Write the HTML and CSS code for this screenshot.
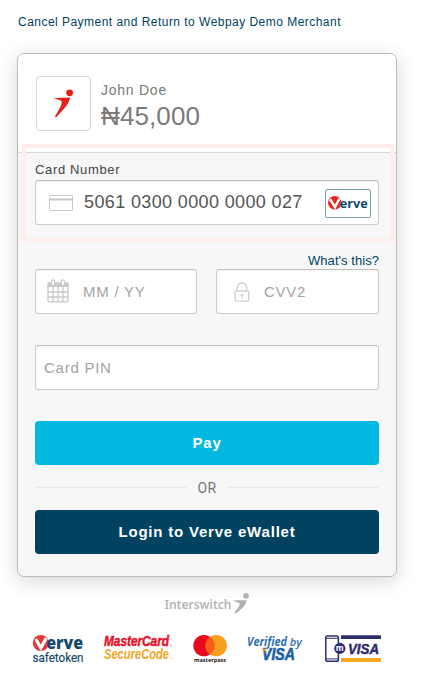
FILE: index.html
```html
<!DOCTYPE html>
<html lang="en">
<head>
<meta charset="utf-8">
<title>Webpay Checkout</title>
<link rel="stylesheet" href="styles.css">
</head>
<body>
<a class="cancel">Cancel Payment and Return to Webpay Demo Merchant</a>
<main class="card">
  <header class="summary">
    <div class="merchant-logo">
      <svg width="55" height="55" viewBox="0 0 55 55"><g fill="#e8201a"><circle cx="33.6" cy="16.8" r="3.4"/><path d="M17.8 22.6C23 21.3 29 21.8 34 21.4C33.4 28 26 34.5 20 41.4L19 40.8C21.5 35.5 26 30 25.7 26C25.5 23.8 21 23.8 17.8 22.6Z"/></g></svg>
    </div>
    <div class="order">
      <div class="name">John Doe</div>
      <div class="amount">₦45,000</div>
    </div>
  </header>
  <section class="form">
    <div class="highlight"></div>
    <label class="label">Card Number</label>
    <div class="field number">
      <svg class="card-icon" width="24" height="16" viewBox="0 0 24 16"><rect x=".5" y=".5" width="23" height="15" rx=".8" fill="#fff" stroke="#c8c8c8"/><path d="M1 4.5H23" stroke="#c8c8c8" stroke-width="2"/></svg>
      <span class="value">5061 0300 0000 0000 027</span>
      <svg class="brand" width="46" height="29" viewBox="0 0 46 29"><rect x=".5" y=".5" width="45" height="28" rx="1.5" fill="#fff" stroke="#7da0b1"/><circle cx="9.8" cy="13.7" r="6.8" fill="#e8241d"/><path d="M5 10.2L10 18L14.6 9.5" fill="none" stroke="#fff" stroke-width="2.6"/><text x="14.8" y="18.7" textLength="28" lengthAdjust="spacingAndGlyphs" class="brand-text">erve</text></svg>
    </div>
    <a class="help">What's this?</a>
    <div class="row">
      <div class="field expiry">
        <svg class="cal-icon" width="22" height="24" viewBox="0 0 22 24"><path d="M1 4H21V8H1Z" fill="#c9c9c9"/><g fill="none" stroke="#c9c9c9" stroke-width="1.3"><rect x="1" y="4" width="20" height="18.8" rx="1"/><path d="M6 8V23M11 8V23M16 8V23M1 13H21M1 18H21"/></g><g fill="#fff" stroke="#c9c9c9" stroke-width="1.2"><rect x="4.6" y=".8" width="3" height="6" rx="1.5"/><rect x="14.4" y=".8" width="3" height="6" rx="1.5"/></g></svg>
        <span class="placeholder">MM / YY</span>
      </div>
      <div class="field cvv">
        <svg class="lock-icon" width="16" height="20" viewBox="0 0 16 20"><g fill="none" stroke="#cfcfcf" stroke-width="1.3"><rect x="1.2" y="9" width="13.6" height="10.1" rx="1"/><path d="M3.2 9V5.8a4.8 4.8 0 0 1 9.6 0V9"/></g><path d="M6.4 12.3H9.6V13.8H8.6V16.3H7.4V13.8H6.4Z" fill="#cfcfcf"/></svg>
        <span class="placeholder">CVV2</span>
      </div>
    </div>
    <div class="field pin"><span class="placeholder">Card PIN</span></div>
    <button class="button pay">Pay</button>
    <div class="divider">OR</div>
    <button class="button login">Login to Verve eWallet</button>
  </section>
</main>
<footer class="footer">
  <svg class="interswitch" width="88" height="24" viewBox="0 0 88 24"><text x="1.5" y="17.5" textLength="67" lengthAdjust="spacingAndGlyphs">Interswitch</text><g fill="#b0b0b0"><circle cx="83" cy="4.8" r="2.8"/><path d="M70 9.8C75 8.7 79.5 9.5 83.6 9C83.2 14.5 77.6 18.8 72.6 22.6L71.4 22C73.5 18.5 76.8 15.5 76.6 12.8C76.4 11.2 73 11.2 70 9.8Z"/></g></svg>
  <div class="logos">
    <svg width="54" height="32" viewBox="0 0 54 32"><circle cx="8.8" cy="10" r="8" fill="#e53935"/><path d="M3.7 6L8.9 15L14.2 5" fill="none" stroke="#fff" stroke-width="3.2"/><text class="l-verve" x="14.2" y="15.6" textLength="37" lengthAdjust="spacingAndGlyphs">erve</text><text class="l-safe" x="0.5" y="28.8" textLength="51" lengthAdjust="spacingAndGlyphs">safetoken</text></svg>
    <svg width="70" height="32" viewBox="0 0 70 32"><text class="l-mc red" x="0" y="13" textLength="65" lengthAdjust="spacingAndGlyphs">MasterCard</text><text class="l-mc gold" x="0" y="26.2" textLength="65" lengthAdjust="spacingAndGlyphs">SecureCode</text><circle cx="67" cy="12.3" r=".6" fill="#e4142b"/><circle cx="67.3" cy="25.3" r=".6" fill="#f2a51f"/></svg>
    <svg width="36" height="32" viewBox="0 0 36 32"><circle cx="12" cy="12.6" r="10.7" fill="#e9071d"/><circle cx="24.2" cy="12.6" r="10.7" fill="#f79f1f"/><path d="M18.1 3.8A10.7 10.7 0 0 1 18.1 21.4A10.7 10.7 0 0 1 18.1 3.8Z" fill="#fb5d14"/><text class="l-pass" x="2" y="28.6" textLength="32" lengthAdjust="spacingAndGlyphs">masterpass</text></svg>
    <svg width="58" height="32" viewBox="0 0 58 32"><text class="l-ver" x="1" y="13.2" textLength="40" lengthAdjust="spacingAndGlyphs">Verified</text><text class="l-by" x="43.8" y="13.2" textLength="12" lengthAdjust="spacingAndGlyphs">by</text><text class="l-visa" x="16" y="27.2" textLength="33" lengthAdjust="spacingAndGlyphs">VISA</text><path d="M14.8 15.8H18.5Q20 15.8 20.3 17.7L20.9 20.7Q18.8 17.2 14.8 15.8Z" fill="#f3a52b"/></svg>
    <svg width="58" height="32" viewBox="0 0 58 32"><path d="M17 2.2H57V6H17Z" fill="#2c2e6b"/><path d="M17 25H57V29H17Z" fill="#f7a823"/><rect x="1.8" y="3" width="12.6" height="25.3" rx="1.8" fill="#fff" stroke="#2c2e6b" stroke-width="1.5"/><path d="M2 5.3H14M2 25.9H14" stroke="#2c2e6b" stroke-width="1"/><circle cx="15.8" cy="15.4" r="5.6" fill="#2c2e6b"/><text class="l-m" x="15.8" y="17.8" text-anchor="middle">m</text><text class="l-visa2" x="24" y="20.5" textLength="31" lengthAdjust="spacingAndGlyphs">VISA</text></svg>
  </div>
</footer>
</body>
</html>
```
FILE: styles.css
```css
* { box-sizing: border-box; }
body {
  margin: 0;
  padding: 14px 0 0 17px;
  background: #fff;
  font-family: "Liberation Sans", Arial, sans-serif;
  width: 425px;
  height: 690px;
  overflow: hidden;
}
svg { display: block; flex: none; overflow: visible; }
.cancel {
  display: block;
  height: 39px;
  padding-left: 1px;
  font-size: 12px;
  line-height: 16px;
  letter-spacing: .47px;
  color: #00425f;
  white-space: nowrap;
}
.card {
  width: 380px;
  height: 524px;
  border: 1px solid #bcbcbc;
  border-radius: 7px;
  background: #f7f7f7;
  box-shadow: 0 4px 20px rgba(0, 0, 0, .16);
}
.summary {
  display: flex;
  gap: 10px;
  height: 99px;
  padding: 22px 18px 0;
  border-bottom: 1px solid #d9d9d9;
  border-radius: 6px 6px 0 0;
  background: #fff;
}
.merchant-logo {
  width: 55px;
  height: 55px;
  border: 1px solid #d8d8d8;
  border-radius: 4px;
}
.merchant-logo svg { margin: -1px; }
.order { color: #7a7a7a; padding-top: 5px; }
.name { font-size: 14px; line-height: 18px; letter-spacing: .75px; }
.amount { font-size: 26px; line-height: 34px; letter-spacing: .1px; }
.form { position: relative; display: flex; flex-direction: column; padding: 8px 17px 0; }
.highlight {
  position: absolute;
  left: 4px;
  top: -9px;
  width: 372px;
  height: 98px;
  border: 4px solid #ffeeec;
  border-radius: 3px;
}
.label { height: 19px; font-size: 13px; line-height: 17px; letter-spacing: .65px; color: #444; }
.field {
  display: flex;
  align-items: center;
  height: 45px;
  border: 1px solid #ccc;
  border-top-color: #bfbfbf;
  border-radius: 3px;
  background: #fff;
  box-shadow: inset 0 1px 2px rgba(0, 0, 0, .06);
}
.number { padding: 0 7px 0 13px; }
.value { margin: 0 auto 0 11px; font-size: 18px; letter-spacing: .37px; color: #555; white-space: nowrap; }
.brand { margin-top: 1px; }
.brand-text { font: 700 13px "Open Sans", sans-serif; fill: #0b4a68; }
.help { height: 44px; padding-top: 27px; text-align: right; font-size: 13px; line-height: 17px; letter-spacing: .05px; color: #00425f; }
.row { display: grid; grid-template-columns: 162px 163px; gap: 19px; }
.placeholder { font-size: 15px; letter-spacing: .75px; color: #a3a3a3; }
.expiry { padding-left: 11px; gap: 14px; }
.cal-icon { margin-top: -2px; }
.cvv { padding-left: 17px; gap: 14px; }
.pin { margin-top: 31px; padding-left: 8px; }
.button {
  height: 44px;
  padding: 0 0 2px;
  border: 0;
  border-radius: 4px;
  color: #fff;
  font: 700 15px "Liberation Sans", Arial, sans-serif;
  letter-spacing: .8px;
}
.pay { margin-top: 31px; background: #00b8e0; }
.login { background: #00425f; }
.divider {
  display: flex;
  align-items: center;
  gap: 10px;
  height: 45px;
  font: 400 14px Roboto, sans-serif;
  letter-spacing: .4px;
  color: #777;
}
.divider::before, .divider::after { content: ""; flex: 1; height: 1px; background: #e8e8e8; }
.footer { padding-top: 14px; }
.interswitch { margin-left: 146px; }
.interswitch text { font: 600 13px "Noto Sans", sans-serif; fill: #b5b5b5; }
.logos { display: flex; margin: 18px 0 0 15px; }
.logos svg:nth-child(2) { margin-left: 18px; }
.logos svg:nth-child(3) { margin-left: 18px; }
.logos svg:nth-child(4) { margin-left: 18px; }
.logos svg:nth-child(5) { margin-left: 20px; }
.l-verve { font: 800 17px "Open Sans", sans-serif; fill: #17496b; }
.l-safe { font: 400 12px Roboto, sans-serif; fill: #17496b; stroke: #17496b; stroke-width: .2px; }
.l-mc { font: italic 700 14px "Liberation Sans", sans-serif; }
.red { fill: #e4142b; stroke: #e4142b; stroke-width: .5px; }
.gold { fill: #f2a51f; }
.l-pass { font: 700 6px "Open Sans", sans-serif; fill: #222; }
.l-ver { font: italic 700 13px "Open Sans", sans-serif; fill: #2c6fb0; }
.l-by { font: italic 600 11px "Open Sans", sans-serif; fill: #2c6fb0; }
.l-visa { font: italic 700 16px "Liberation Sans", sans-serif; fill: #1b5fa5; stroke: #1b5fa5; stroke-width: .6px; }
.l-m { font: 700 8px "Open Sans", sans-serif; fill: #fff; }
.l-visa2 { font: italic 700 14.5px "Liberation Sans", sans-serif; fill: #2c2e6b; stroke: #2c2e6b; stroke-width: .5px; }
```
